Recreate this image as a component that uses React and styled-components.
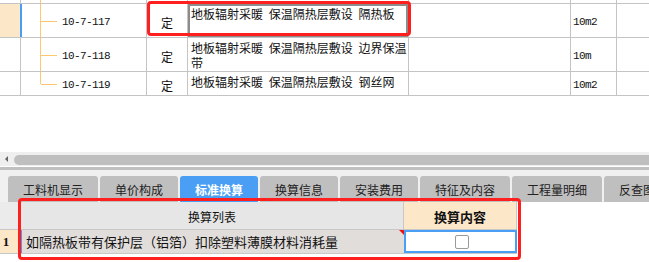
import React from "react";
import styled, { createGlobalStyle } from "styled-components";

const GlobalStyle = createGlobalStyle`
  html, body {
    margin: 0;
    padding: 0;
    background: #fff;
    overflow: hidden;
  }
  body {
    font-family: "Noto Sans CJK SC", "DejaVu Sans", sans-serif;
    color: #111;
  }
`;

const rows = [
  { code: "", type: "", name: "", unit: "", height: 3, stub: true },
  { code: "10-7-117", type: "定", name: "地板辐射采暖 保温隔热层敷设 隔热板", unit: "10m2", height: 33, selected: true },
  { code: "10-7-118", type: "定", name: "地板辐射采暖 保温隔热层敷设 边界保温", wrap: "带", unit: "10m", height: 33 },
  { code: "10-7-119", type: "定", name: "地板辐射采暖 保温隔热层敷设 钢丝网", unit: "10m2", height: 23, last: true },
];

const tabs = ["工料机显示", "单价构成", "标准换算", "换算信息", "安装费用", "特征及内容", "工程量明细", "反查图形工程量"];

const App = () => {
  return (
    <>
      <GlobalStyle />
      <Page>
        <TopGrid>
          {rows.map((r, i) => (
            <Row key={i} style={{ height: r.height }}>
              <MarkCell $selected={r.selected} />
              <TreeCell $last={r.last} $stub={r.stub}>
                {r.code}
              </TreeCell>
              <TypeCell>{r.type}</TypeCell>
              <NameCell $editing={r.selected}>
                {r.name}
                {r.wrap && (
                  <>
                    <br />
                    {r.wrap}
                  </>
                )}
              </NameCell>
              <BlankCell />
              <UnitCell>{r.unit}</UnitCell>
              <TailCell />
            </Row>
          ))}
        </TopGrid>

        <Spacer />

        <ScrollTrack>
          <ScrollArrow />
          <ScrollThumb />
        </ScrollTrack>
        <Divider />

        <TabBar>
          {tabs.map((t) => (
            <Tab key={t} $active={t === "标准换算"}>
              {t}
            </Tab>
          ))}
        </TabBar>

        <BottomGrid>
          <HeadRow>
            <Corner />
            <HeadCell>换算列表</HeadCell>
            <HeadCell $accent>换算内容</HeadCell>
          </HeadRow>
          <DataRow>
            <RowNo>1</RowNo>
            <ListCell>
              如隔热板带有保护层（铝箔）扣除塑料薄膜材料消耗量
              <Flag />
            </ListCell>
            <CheckCell>
              <CheckBox />
            </CheckCell>
          </DataRow>
        </BottomGrid>

        <Mark style={{ left: 147, top: 1, width: 264, height: 35 }} />
        <Mark style={{ left: 18, top: 198, width: 503, height: 62 }} />
      </Page>
    </>
  );
};

const Page = styled.div`
  position: relative;
  width: 649px;
  height: 262px;
  overflow: hidden;
  display: flex;
  flex-direction: column;
  background: #fff;
`;

const TopGrid = styled.div`
  display: flex;
  flex-direction: column;
`;

const Row = styled.div`
  display: grid;
  grid-template-columns: 21px 126px 41px 221px 162px 46px 1fr;
  border-bottom: 1px solid #c4c4c4;
  font-size: 12px;
`;

const Cell = styled.div`
  border-right: 1px solid #c4c4c4;
  display: flex;
  align-items: center;
  overflow: hidden;
  white-space: nowrap;
`;

const MarkCell = styled(Cell)`
  background: ${(p) => (p.$selected ? "#fde7c9" : "#fff")};
  border-right: ${(p) => (p.$selected ? "2px solid #4a9df5" : "1px solid #c4c4c4")};
  margin-right: ${(p) => (p.$selected ? "-1px" : "0")};
`;

const TreeCell = styled(Cell)`
  position: relative;
  padding-left: 41px;
  font-family: "Liberation Mono", monospace;
  font-size: 11px;
  letter-spacing: -0.6px;
  padding-top: 2px;

  &::before {
    content: "";
    position: absolute;
    left: 19px;
    top: 0;
    width: 1px;
    height: ${(p) => (p.$last ? "50%" : "calc(100% + 1px)")};
    background: #ffc870;
  }

  &::after {
    content: "";
    display: ${(p) => (p.$stub ? "none" : "block")};
    position: absolute;
    left: 20px;
    top: 50%;
    width: 16px;
    height: 1px;
    background: #ffc870;
  }
`;

const TypeCell = styled(Cell)`
  justify-content: center;
  padding-top: 3px;
  font-size: 12px;
`;

const NameCell = styled(Cell)`
  align-items: flex-start;
  white-space: normal;
  padding: 2px 0 0 3px;
  line-height: 15px;
  word-spacing: 3px;
  box-shadow: ${(p) => (p.$editing ? "inset 0 0 0 2px #8c8c8c" : "none")};
`;

const BlankCell = styled(Cell)``;

const UnitCell = styled(Cell)`
  padding: 3px 0 0 2px;
  font-family: "Liberation Mono", monospace;
  font-size: 11px;
  letter-spacing: -0.6px;
`;

const TailCell = styled(Cell)`
  border-right: none;
`;

const Spacer = styled.div`
  flex: 0 0 56px;
`;

const ScrollTrack = styled.div`
  position: relative;
  height: 14px;
  background: #efefef;
  display: flex;
  align-items: center;
  padding-left: 14px;
`;

const ScrollArrow = styled.div`
  position: absolute;
  left: 5px;
  top: 4px;
  width: 0;
  height: 0;
  border-top: 3px solid transparent;
  border-bottom: 3px solid transparent;
  border-right: 3px solid #666;
`;

const ScrollThumb = styled.div`
  flex: 1;
  height: 10px;
  margin-top: 2px;
  border-radius: 5px 0 0 5px;
  background: #bfbfbf;
`;

const Divider = styled.div`
  height: 3px;
  margin-top: 1px;
  background: #c0c0c0;
`;

const TabBar = styled.div`
  display: flex;
  gap: 2px;
  padding: 6px 0 0 8px;
  background: #f0f0f0;
  white-space: nowrap;
`;

const Tab = styled.div`
  flex: none;
  height: 26px;
  padding: 0 15px;
  display: flex;
  align-items: center;
  border-radius: 3px 3px 0 0;
  font-size: 12px;
  font-weight: ${(p) => (p.$active ? 700 : 400)};
  color: ${(p) => (p.$active ? "#fff" : "#222")};
  background: ${(p) => (p.$active ? "#4a9ff5" : "#bfbfbf")};
`;

const BottomGrid = styled.div`
  width: 517px;
  display: flex;
  flex-direction: column;
`;

const HeadRow = styled.div`
  display: grid;
  grid-template-columns: 21px 383px 113px;
  height: 27px;
  border-bottom: 1px solid #c8c8c8;
`;

const Corner = styled.div`
  background: #ebebeb;
  border-right: 1px solid #c8c8c8;
`;

const HeadCell = styled.div`
  display: flex;
  align-items: center;
  justify-content: center;
  font-size: ${(p) => (p.$accent ? "13px" : "12px")};
  font-weight: ${(p) => (p.$accent ? 700 : 400)};
  background: ${(p) => (p.$accent ? "#fde7c9" : "#e6e6e6")};
  border-right: 1px solid #c8c8c8;
  padding-top: 1px;
`;

const DataRow = styled.div`
  display: grid;
  grid-template-columns: 21px 383px 113px;
  height: 23px;
  border-bottom: 1px solid #c8c8c8;
`;

const RowNo = styled.div`
  display: flex;
  align-items: center;
  justify-content: center;
  padding-right: 8px;
  font-family: "Liberation Serif", serif;
  font-weight: 700;
  font-size: 13px;
  background: #fde7c9;
  border-right: 1px solid #c8c8c8;
`;

const ListCell = styled.div`
  position: relative;
  display: flex;
  align-items: center;
  padding-left: 4px;
  font-size: 13px;
  white-space: nowrap;
  background: #e1dddb;
  border-left: 2px solid #4a9df5;
  margin-left: -1px;
`;

const Flag = styled.span`
  position: absolute;
  right: 0;
  top: 0;
  width: 0;
  height: 0;
  border-top: 5px solid #f01010;
  border-left: 5px solid transparent;
`;

const CheckCell = styled.div`
  display: flex;
  align-items: center;
  justify-content: center;
  background: #fff;
  box-shadow: inset 0 0 0 2px #4a9ff5;
`;

const CheckBox = styled.div`
  width: 12px;
  height: 12px;
  border: 1px solid #9a9a9a;
  border-radius: 2px;
  background: #fff;
  margin-left: 2px;
`;

const Mark = styled.div`
  position: absolute;
  box-sizing: border-box;
  border: 3px solid #ff1f1f;
  border-radius: 4px;
  pointer-events: none;
`;

export default App;
